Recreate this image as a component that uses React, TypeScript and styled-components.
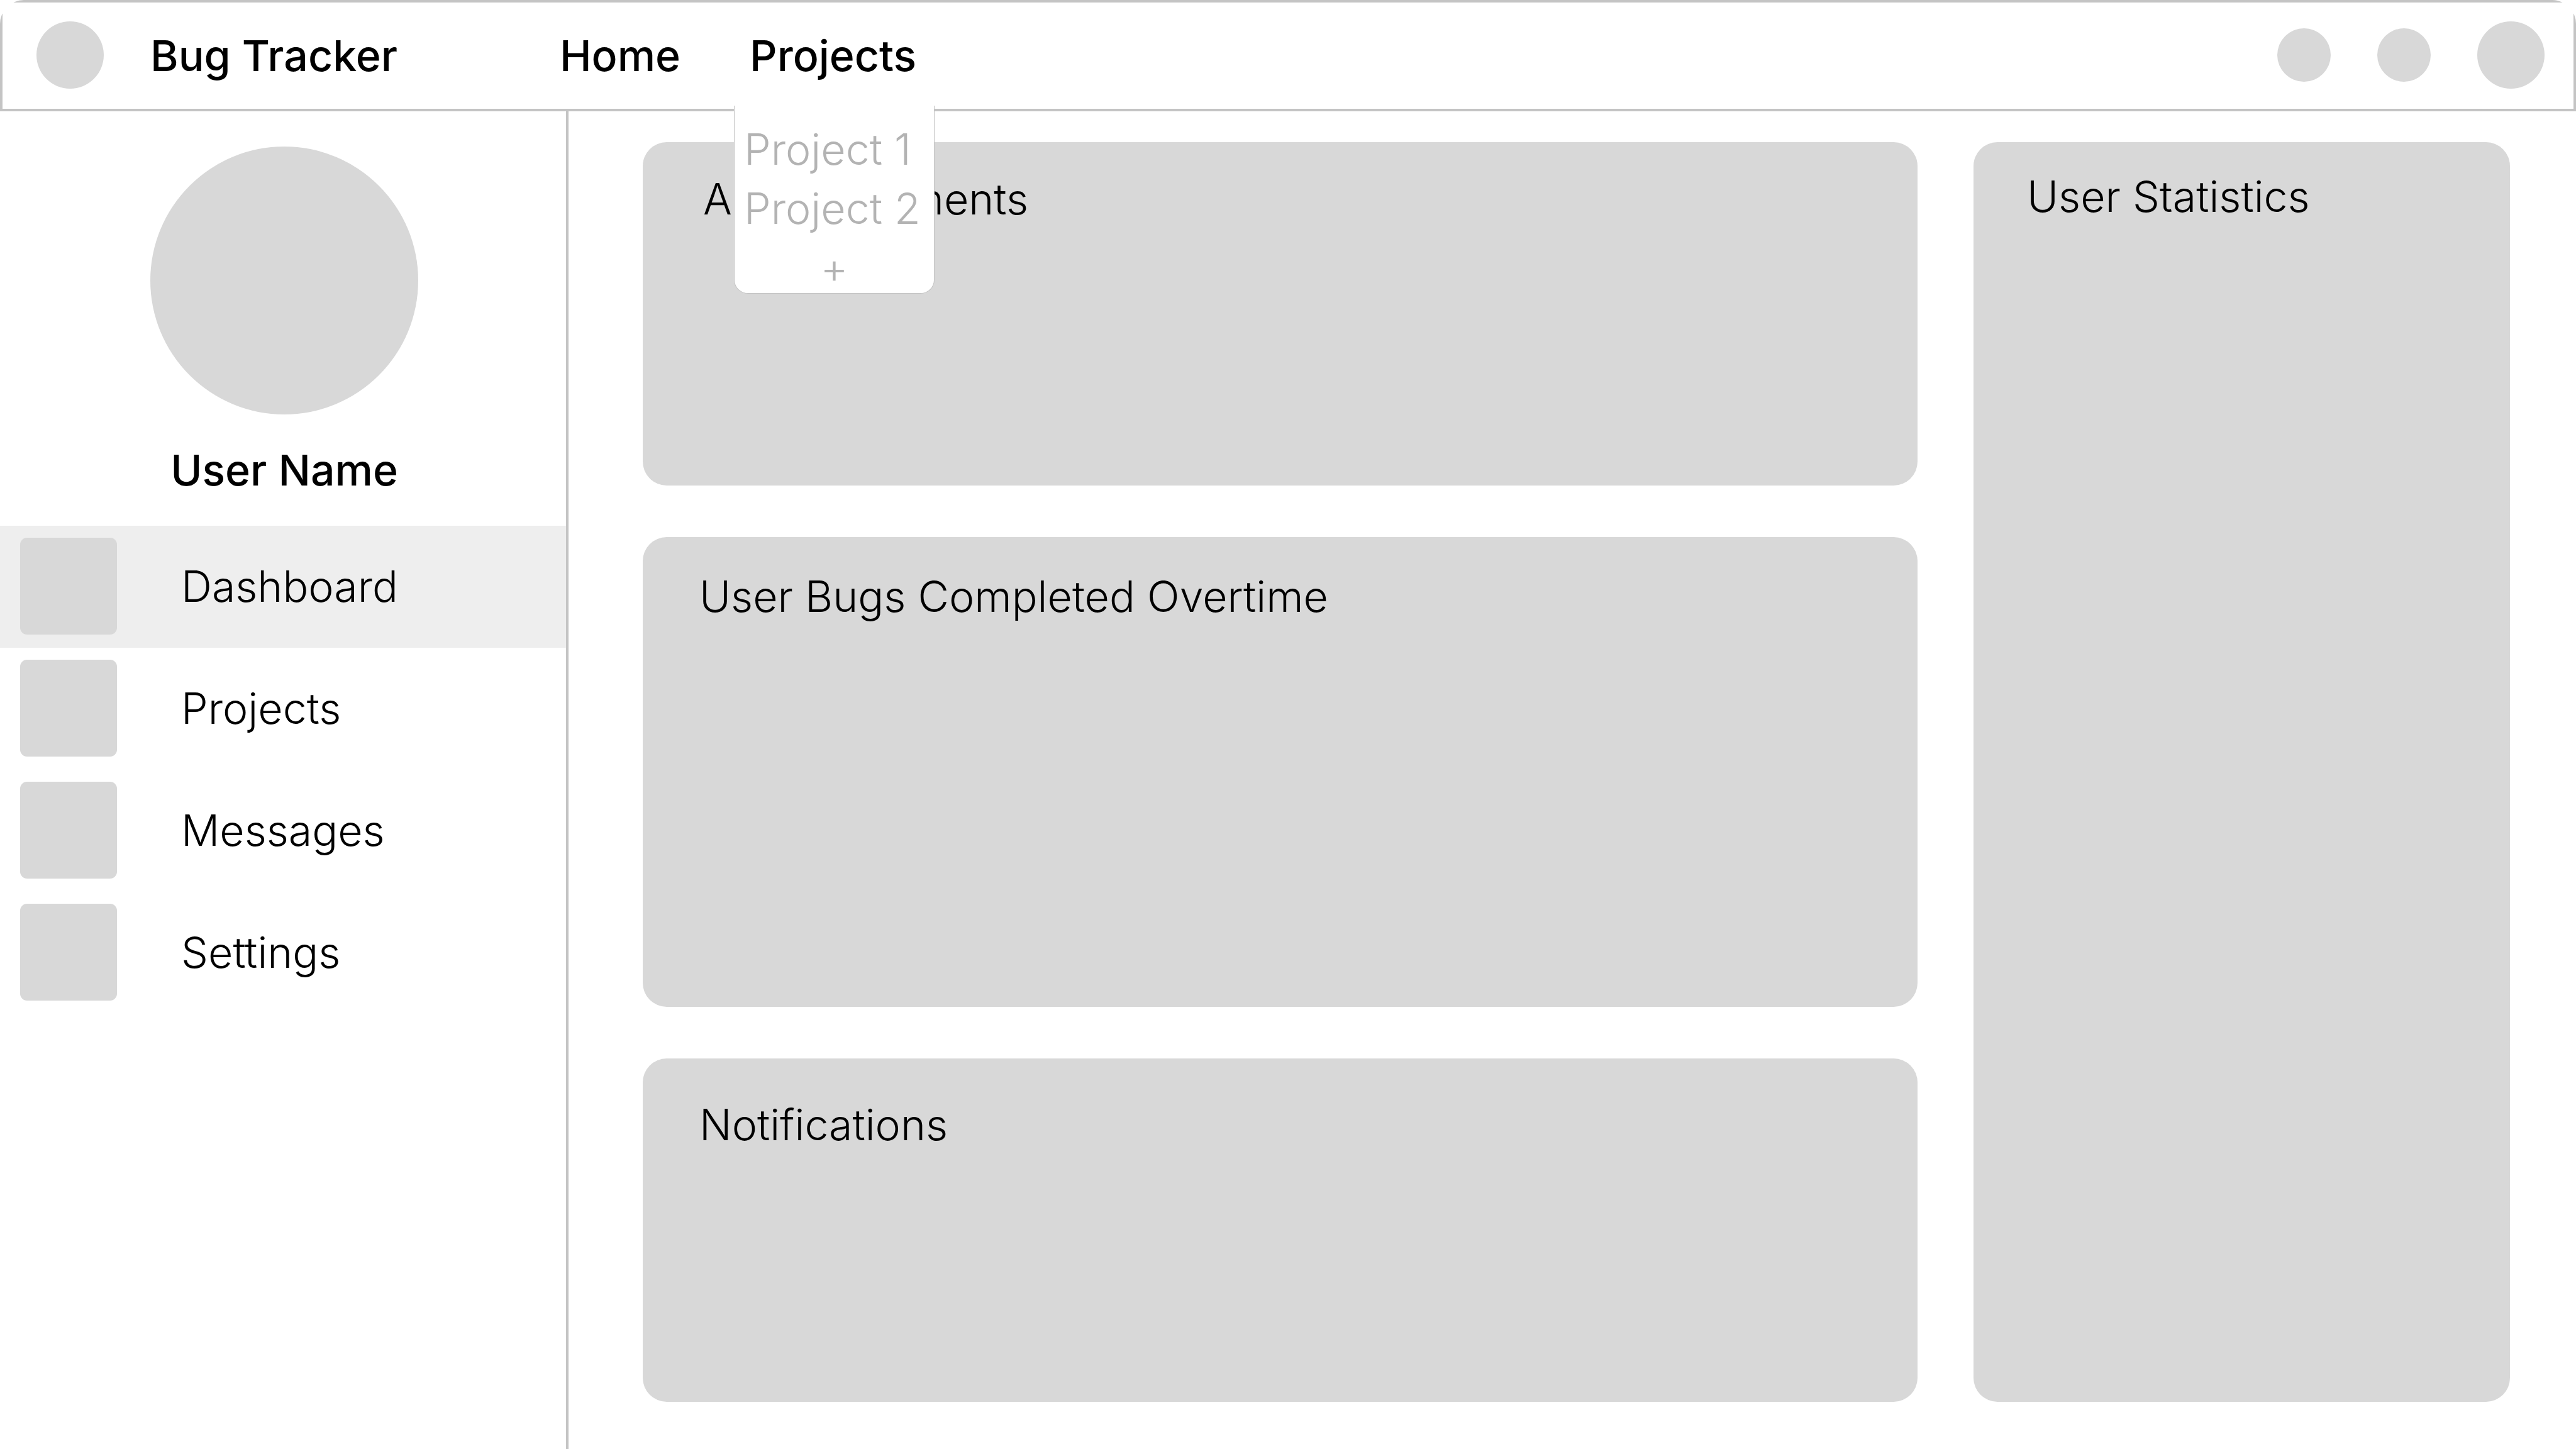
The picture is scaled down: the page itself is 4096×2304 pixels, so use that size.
import React from "react";
import styled, { createGlobalStyle } from "styled-components";

const GlobalStyle = createGlobalStyle`
  *, *::before, *::after { box-sizing: border-box; }
  html, body, #root { height: 100%; }
  body {
    margin: 0;
    background: #fff;
    color: #000;
    font-family: Inter, "Liberation Sans", sans-serif;
    font-size: 68px;
    line-height: 94px;
    font-weight: 300;
  }
  a { color: inherit; text-decoration: none; }
  button { font: inherit; color: inherit; border: 0; padding: 0; background: none; cursor: pointer; }
  ul { list-style: none; margin: 0; padding: 0; }
  h1, h2, p { margin: 0; font: inherit; }
`;

const Page = styled.div`
  min-height: 100%;
  display: flex;
  flex-direction: column;
`;

const Header = styled.header`
  padding: 4px;
  background: #c4c4c4;
  border-radius: 38px 38px 0 0;
`;

const HeaderBar = styled.div`
  display: flex;
  align-items: center;
  padding: 30px 46px 32px 54px;
  background: #fff;
  font-weight: 500;
`;

const Brand = styled.a`
  display: flex;
  align-items: center;
  gap: 74px;
`;

const Disc = styled.span<{ $size: number }>`
  display: block;
  flex: none;
  width: ${(p) => p.$size}px;
  height: ${(p) => p.$size}px;
  border-radius: 50%;
  background: #d8d8d8;
`;

const TopNav = styled.nav`
  display: flex;
  gap: 110px;
  margin-left: 258px;
`;

const MenuAnchor = styled.div`
  position: relative;
`;

const Menu = styled.ul`
  position: absolute;
  z-index: 1;
  top: 127px;
  left: -25px;
  width: 319px;
  height: 299px;
  padding: 22px 15px 0;
  border: 1px solid #c4c4c4;
  border-top: 0;
  border-radius: 0 0 22px 22px;
  background: #fff;
  color: #b3b3b3;
  font-weight: 300;
  white-space: nowrap;
`;

const MenuAdd = styled.li`
  text-align: center;
`;

const Actions = styled.div`
  display: flex;
  align-items: center;
  gap: 74px;
  margin-left: auto;
`;

const Body = styled.div`
  flex: 1;
  display: flex;
`;

const Sidebar = styled.aside`
  flex: none;
  width: 904px;
  border-right: 4px solid #c4c4c4;
`;

const Profile = styled.div`
  display: flex;
  flex-direction: column;
  align-items: center;
  gap: 41px;
  padding: 56px 0 42px 4px;
  font-weight: 500;
`;

const SideLink = styled.a<{ $active?: boolean }>`
  display: flex;
  align-items: center;
  gap: 102px;
  padding: 19px 32px 21px;
  background: ${(p) => (p.$active ? "#eee" : "transparent")};
`;

const Tile = styled.span`
  width: 154px;
  height: 154px;
  border-radius: 11px;
  background: #d8d8d8;
`;

const Main = styled.main`
  flex: 1;
  display: grid;
  grid-template-columns: 2027fr 853fr;
  gap: 89px;
  padding: 49px 105px 75px 118px;
`;

const Feed = styled.div`
  display: grid;
  grid-template-rows: 546fr 747fr 546fr;
  gap: 82px;
`;

const Card = styled.section<{ $top?: number; $left?: number }>`
  padding: ${(p) => p.$top ?? 47}px 90px 48px ${(p) => p.$left ?? 90}px;
  border-radius: 38px;
  background: #d8d8d8;
`;

const sideItems = ["Dashboard", "Projects", "Messages", "Settings"];

export default function App() {
  return (
    <Page>
      <GlobalStyle />
      <Header>
        <HeaderBar>
          <Brand href="#">
            <Disc $size={107} />
            Bug Tracker
          </Brand>
          <TopNav>
            <a href="#home">Home</a>
            <MenuAnchor>
              <button type="button" aria-expanded="true">Projects</button>
              <Menu>
                <li><a href="#project-1">Project 1</a></li>
                <li><a href="#project-2">Project 2</a></li>
                <MenuAdd><button type="button" aria-label="Add project">+</button></MenuAdd>
              </Menu>
            </MenuAnchor>
          </TopNav>
          <Actions>
            <button type="button" aria-label="Messages"><Disc $size={85} /></button>
            <button type="button" aria-label="Notifications"><Disc $size={85} /></button>
            <button type="button" aria-label="Account"><Disc $size={107} /></button>
          </Actions>
        </HeaderBar>
      </Header>
      <Body>
        <Sidebar>
          <Profile>
            <Disc $size={426} />
            <p>User Name</p>
          </Profile>
          <nav>
            {sideItems.map((item, i) => (
              <SideLink key={item} href={"#" + item.toLowerCase()} $active={i === 0}>
                <Tile />
                {item}
              </SideLink>
            ))}
          </nav>
        </Sidebar>
        <Main>
          <Feed>
            <Card $top={43} $left={96}><h2>Announcements</h2></Card>
            <Card><h2>User Bugs Completed Overtime</h2></Card>
            <Card $top={58}><h2>Notifications</h2></Card>
          </Feed>
          <Card $top={39} $left={85}><h2>User Statistics</h2></Card>
        </Main>
      </Body>
    </Page>
  );
}
